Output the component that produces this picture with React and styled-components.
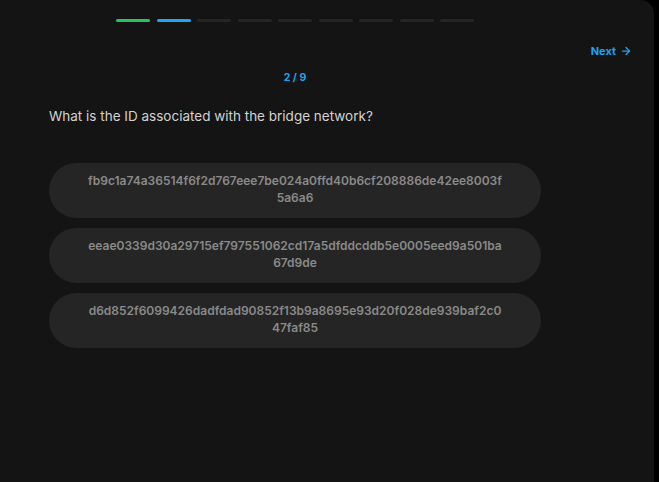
import React from "react";
import styled, { createGlobalStyle } from "styled-components";
import { ArrowRight } from "lucide-react";

const Global = createGlobalStyle`
  html, body { margin: 0; padding: 0; background: #000; }
  body { font-family: Inter, "Noto Sans", sans-serif; }
  * { box-sizing: border-box; }
`;

const Panel = styled.div`
  width: 654px;
  min-height: 482px;
  background: #141414;
  border-top-right-radius: 14px;
  padding: 19px 22px 0 49px;
  display: flex;
  flex-direction: column;
`;

const Column = styled.div`
  width: 492px;
  display: flex;
  flex-direction: column;
`;

const Track = styled.div`
  width: 358px;
  align-self: center;
  display: flex;
  gap: 6.5px;
`;

const Segment = styled.div`
  flex: 1;
  height: 3px;
  border-radius: 2px;
  background: ${(p) => p.$color};
`;

const NextRow = styled.div`
  display: flex;
  justify-content: flex-end;
  margin-top: 22px;
`;

const NextButton = styled.button`
  background: none;
  border: none;
  padding: 0;
  display: flex;
  align-items: center;
  gap: 4px;
  color: #1ea3f2;
  font-family: Inter, sans-serif;
  font-weight: 700;
  font-size: 11px;
  line-height: 14px;
  cursor: pointer;
`;

const Counter = styled.div`
  text-align: center;
  color: #1ea3f2;
  font-weight: 700;
  font-size: 10.5px;
  line-height: 14px;
  margin-top: 13px;
`;

const Question = styled.div`
  color: #d2d2d2;
  font-size: 13.5px;
  line-height: 20px;
  margin-top: 21px;
`;

const Options = styled.div`
  display: flex;
  flex-direction: column;
  gap: 10px;
  margin-top: 37px;
`;

const Option = styled.button`
  height: 55px;
  border: none;
  border-radius: 28px;
  background: #252525;
  color: #8a8a8a;
  font-family: Inter, sans-serif;
  font-weight: 600;
  font-size: 12px;
  line-height: 17px;
  padding: 0 39px 4px;
  text-align: center;
  word-break: break-all;
  cursor: pointer;
`;

const colors = ["#22c55e", "#1ea7f5", "#252525", "#252525", "#252525", "#252525", "#252525", "#252525", "#252525"];

const answers = [
  "fb9c1a74a36514f6f2d767eee7be024a0ffd40b6cf208886de42ee8003f5a6a6",
  "eeae0339d30a29715ef797551062cd17a5dfddcddb5e0005eed9a501ba67d9de",
  "d6d852f6099426dadfdad90852f13b9a8695e93d20f028de939baf2c047faf85",
];

export default function App() {
  return (
    <>
      <Global />
      <Panel>
        <Column>
          <Track>
            {colors.map((c, i) => (
              <Segment key={i} $color={c} />
            ))}
          </Track>
        </Column>
        <NextRow>
          <NextButton>
            Next <ArrowRight size={12} strokeWidth={2.5} />
          </NextButton>
        </NextRow>
        <Column>
          <Counter>2 / 9</Counter>
          <Question>What is the ID associated with the bridge network?</Question>
          <Options>
            {answers.map((a) => (
              <Option key={a}>{a}</Option>
            ))}
          </Options>
        </Column>
      </Panel>
    </>
  );
}
